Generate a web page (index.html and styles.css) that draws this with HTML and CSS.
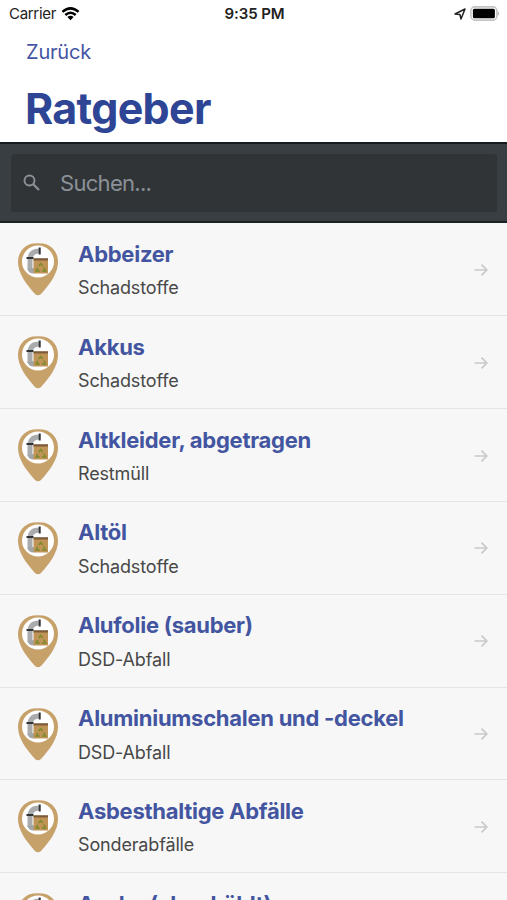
FILE: index.html
```html
<!DOCTYPE html>
<html lang="de">
<head>
<meta charset="utf-8">
<title>Ratgeber</title>
<link rel="stylesheet" href="styles.css">
</head>
<body>
<svg class="defs" aria-hidden="true">
  <symbol id="pin" viewBox="0 0 40 53">
    <path d="M15 0.500Q20 -0.200 25 0.500C34 2 40 9.500 40 19C40 30 32 41 23 51Q20 53.500 17 51C8 41 0 30 0 19C0 9.500 6 2 15 0.500Z" fill="#c7a16a"/>
    <circle cx="20" cy="18.500" r="16" fill="#fff"/>
    <path d="M12 27V17Q12 8 21 8" fill="none" stroke="#a9abad" stroke-width="5"/>
    <path d="M9.500 26Q10.500 30.500 16 30.500V25Z" fill="#a2a5a8"/>
    <path d="M8.500 15H15.500M21.700 4.500V11.500" stroke="#303336" stroke-width="2" fill="none"/>
    <path d="M15.500 16H30V30.500H15.500Z" fill="#c09456"/>
    <path d="M15.500 15.200H30V17.500H15.500Z" fill="#7d5c3a"/>
    <path d="M20.800 23L22.700 20.500L24.700 23M25.700 24.500L27.500 28H24M21.800 28H18.200L19.800 25" fill="none" stroke="#7d8b2e" stroke-width="1.600"/>
  </symbol>
  <symbol id="arrow" viewBox="0 0 14 14">
    <path d="M0.500 7H12.500M7.500 1.700L12.800 7L7.500 12.300" fill="none" stroke="#c9c9c9" stroke-width="1.700"/>
  </symbol>
</svg>
<div class="status">
  <div class="carrier"><span>Carrier</span>
    <svg width="19" height="14" viewBox="0 0 18 14"><g fill="none" stroke="#000" stroke-width="2.500"><path d="M0.900 4.900Q9-2.200 17.100 4.900"/><path d="M3.800 8Q9 3.500 14.200 8"/></g><path d="M5.900 10Q9 7.500 12.100 10L9 13.300Z"/></svg>
  </div>
  <div class="time">9:35 PM</div>
  <div class="power">
    <svg width="12" height="12" viewBox="0 0 12 12"><path d="M1 6L11 1L7 11L5.900 6.500Z" fill="none" stroke="#222" stroke-width="1.500" stroke-linejoin="round"/></svg>
    <svg width="30" height="15" viewBox="0 0 30 15"><rect x="0.900" y="0.900" width="26" height="13.200" rx="4" fill="#fff" stroke="#c4c4c4" stroke-width="1.600"/><rect x="2.900" y="2.700" width="22" height="9.600" rx="1.500"/><path d="M27.700 5Q30.500 7.500 27.700 10Z" fill="#b5b5b5"/></svg>
  </div>
</div>
<header class="header">
  <a class="back">Zurück</a>
  <h1 class="heading">Ratgeber</h1>
</header>
<div class="search">
  <div class="field">
    <svg width="18" height="18" viewBox="0 0 18 18"><circle cx="6.500" cy="6.500" r="5" fill="none" stroke="#8b9197" stroke-width="1.900"/><path d="M10.300 10.300L16 16" stroke="#8b9197" stroke-width="2.300"/></svg>
    <span class="placeholder">Suchen...</span>
  </div>
</div>
<main class="list">
  <div class="row"><svg class="pin"><use href="#pin"/></svg><div class="label"><div class="name">Abbeizer</div><div class="kind">Schadstoffe</div></div><svg class="arrow"><use href="#arrow"/></svg></div>
  <div class="row"><svg class="pin"><use href="#pin"/></svg><div class="label"><div class="name">Akkus</div><div class="kind">Schadstoffe</div></div><svg class="arrow"><use href="#arrow"/></svg></div>
  <div class="row"><svg class="pin"><use href="#pin"/></svg><div class="label"><div class="name">Altkleider, abgetragen</div><div class="kind">Restmüll</div></div><svg class="arrow"><use href="#arrow"/></svg></div>
  <div class="row"><svg class="pin"><use href="#pin"/></svg><div class="label"><div class="name">Altöl</div><div class="kind">Schadstoffe</div></div><svg class="arrow"><use href="#arrow"/></svg></div>
  <div class="row"><svg class="pin"><use href="#pin"/></svg><div class="label"><div class="name">Alufolie (sauber)</div><div class="kind">DSD-Abfall</div></div><svg class="arrow"><use href="#arrow"/></svg></div>
  <div class="row"><svg class="pin"><use href="#pin"/></svg><div class="label"><div class="name">Aluminiumschalen und -deckel</div><div class="kind">DSD-Abfall</div></div><svg class="arrow"><use href="#arrow"/></svg></div>
  <div class="row"><svg class="pin"><use href="#pin"/></svg><div class="label"><div class="name">Asbesthaltige Abfälle</div><div class="kind">Sonderabfälle</div></div><svg class="arrow"><use href="#arrow"/></svg></div>
  <div class="row"><svg class="pin"><use href="#pin"/></svg><div class="label"><div class="name">Asche (abgekühlt)</div></div></div>
</main>
</body>
</html>
```
FILE: styles.css
```css
* { box-sizing: border-box; }
html, body { height: 900px; overflow: hidden; }
body { margin: 0; background: #fff; font-family: Inter, "Liberation Sans", sans-serif; display: flex; flex-direction: column; }
svg { display: block; flex: none; }
.defs { position: absolute; width: 0; height: 0; }
.status { height: 28px; flex: none; display: grid; grid-template-columns: 1fr auto 1fr; align-items: center; padding: 0 7px 1px 9px; color: #222; font-size: 15px; }
.carrier { display: flex; align-items: center; gap: 5px; letter-spacing: -0.3px; }
.time { font-weight: 600; letter-spacing: -0.1px; }
.power { display: flex; align-items: center; justify-content: flex-end; gap: 4px; }
.header { height: 114px; flex: none; padding: 10px 26px 0; color: #2e4494; }
.back { display: block; font-size: 20px; line-height: 29px; color: #4356a3; letter-spacing: -0.2px; }
.heading { margin: 14px 0 0 -1px; font-size: 43px; line-height: 54px; font-weight: 700; letter-spacing: -0.7px; }
.search { height: 81px; flex: none; background: #393e42; border-top: 2px solid #161a1d; border-bottom: 2px solid #1b2023; padding: 10px 10px 9px 11px; }
.field { height: 58px; background: #303437; border-radius: 3px; display: flex; align-items: center; padding-left: 12px; gap: 19px; color: #8b9197; }
.placeholder { font-size: 22px; line-height: 28px; letter-spacing: -0.7px; }
.list { flex: 1; min-height: 0; overflow: hidden; background: #f7f7f7; padding-top: 0.4px; }
.row { height: 92.85px; display: flex; align-items: flex-start; border-bottom: 1.5px solid #e4e4e4; padding: 0 19px 0 18px; }
.pin { width: 40px; height: 53px; margin-top: 20px; }
.label { margin-left: 20px; flex: 1; padding-top: 16.5px; }
.name { font-size: 22px; line-height: 28px; font-weight: 650; color: #4355a0; letter-spacing: -0.27px; white-space: nowrap; }
.kind { margin-top: 8.5px; font-size: 18px; line-height: 24px; color: #484848; letter-spacing: -0.15px; }
.arrow { width: 14px; height: 14px; margin-top: 39.500px; }
```
